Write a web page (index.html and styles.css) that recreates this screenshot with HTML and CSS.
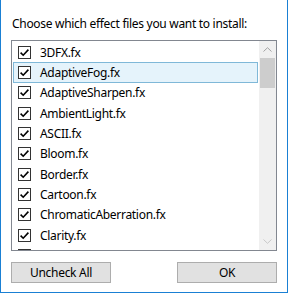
FILE: index.html
```html
<!DOCTYPE html>
<html lang="en">
<head>
    <meta charset="UTF-8">
    <title>Install effects</title>
    <link rel="stylesheet" href="styles.css">
</head>
<body>
    <div class="window">
        <p class="prompt">Choose which effect files you want to install:</p>
        <div class="listbox">
            <div class="items">
                <div class="item"><span class="check"></span>3DFX.fx</div>
                <div class="item selected"><span class="check"></span>AdaptiveFog.fx</div>
                <div class="item"><span class="check"></span>AdaptiveSharpen.fx</div>
                <div class="item"><span class="check"></span>AmbientLight.fx</div>
                <div class="item"><span class="check"></span>ASCII.fx</div>
                <div class="item"><span class="check"></span>Bloom.fx</div>
                <div class="item"><span class="check"></span>Border.fx</div>
                <div class="item"><span class="check"></span>Cartoon.fx</div>
                <div class="item"><span class="check"></span>ChromaticAberration.fx</div>
                <div class="item"><span class="check"></span>Clarity.fx</div>
                <div class="item"><span class="check"></span>Colourfulness.fx</div>
            </div>
            <div class="scrollbar">
                <div class="arrow">
                    <svg width="9" height="5" viewBox="0 0 9 5"><path d="M0.5 4.5 L4.5 0.7 L8.5 4.5" fill="none" stroke="#a3a3a3" stroke-width="1"/></svg>
                </div>
                <div class="thumb"></div>
                <div class="track"></div>
                <div class="arrow">
                    <svg width="9" height="5" viewBox="0 0 9 5"><path d="M0.5 0.5 L4.5 4.3 L8.5 0.5" fill="none" stroke="#c8c8c8" stroke-width="1"/></svg>
                </div>
            </div>
        </div>
        <div class="buttons">
            <button class="btn">Uncheck All</button>
            <button class="btn">OK</button>
        </div>
    </div>
</body>
</html>
```

FILE: styles.css
```css
body{
    margin: 0;
    background-color: #fff;
    font-family: "Noto Sans", "Open Sans", sans-serif;
    font-size: 12px;
    letter-spacing: -0.3px;
    color: #000;
}
.window{
    width: 288px;
    height: 293px;
    box-sizing: border-box;
    border-left: 1px solid #1a80d4;
    border-right: 1px solid #1a80d4;
    border-bottom: 1px solid #1a80d4;
    padding: 0 10px 0 10px;
}
.prompt{
    margin: 0;
    padding: 16px 0 0 1px;
    height: 24px;
    line-height: 16px;
}
.listbox{
    display: flex;
    height: 211px;
    border: 1px solid #828790;
    box-sizing: border-box;
    overflow: hidden;
}
.items{
    flex: 1;
    padding: 1px 1px 0 1px;
    overflow: hidden;
}
.item{
    display: flex;
    align-items: center;
    height: 20.33px;
    box-sizing: border-box;
    padding-left: 4px;
    border: 1px solid transparent;
    white-space: nowrap;
}
.item.selected{
    background-color: #e5f3fb;
    border-color: #7fb8d8;
}
.check{
    width: 13px;
    height: 13px;
    box-sizing: border-box;
    border: 1px solid #333;
    background: #fff url("data:image/svg+xml;utf8,<svg xmlns='http://www.w3.org/2000/svg' width='11' height='11'><path d='M1.6 5.6 L4.2 8.2 L9.4 2.6' fill='none' stroke='black' stroke-width='1.6'/></svg>") center no-repeat;
    margin-right: 9px;
    flex: none;
}
.scrollbar{
    width: 17px;
    background-color: #f0f0f0;
    display: flex;
    flex-direction: column;
}
.arrow{
    height: 17px;
    display: flex;
    justify-content: center;
    align-items: center;
}
.thumb{
    height: 30px;
    margin: 0 1px;
    background-color: #cdcdcd;
}
.track{
    flex: 1;
}
.buttons{
    display: flex;
    justify-content: space-between;
    margin-top: 11px;
}
.btn{
    width: 100px;
    height: 21px;
    padding: 0;
    font-family: "Noto Sans", "Open Sans", sans-serif;
    font-size: 12px;
    letter-spacing: -0.3px;
    color: #000;
    background-color: #e1e1e1;
    border: 1px solid #adadad;
    border-radius: 0;
}
```
